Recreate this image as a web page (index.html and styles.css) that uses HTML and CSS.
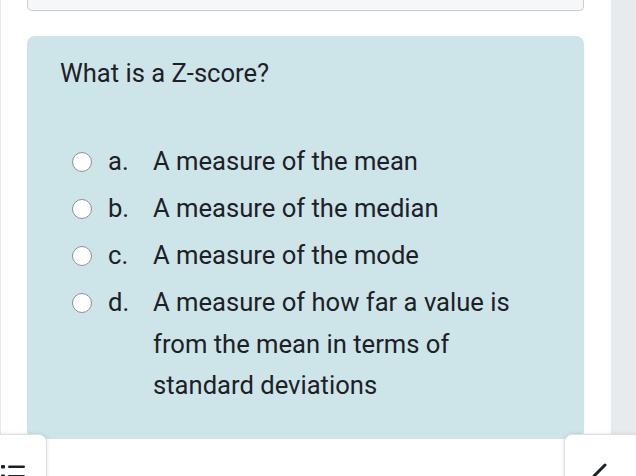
FILE: index.html
```html
<!DOCTYPE html>
<html lang="en">
<head>
<meta charset="utf-8">
<title>Quiz question</title>
<link rel="stylesheet" href="styles.css">
</head>
<body>
<div class="page">
  <div class="edge"></div>
  <main class="main">
    <div class="prev-box"></div>
    <section class="card">
      <div class="qtext">What is a Z-score?</div>
      <div class="answers">
        <label class="opt"><input type="radio" name="q1" class="radio"><span class="num">a.</span><span class="txt">A measure of the mean</span></label>
        <label class="opt"><input type="radio" name="q1" class="radio"><span class="num">b.</span><span class="txt">A measure of the median</span></label>
        <label class="opt"><input type="radio" name="q1" class="radio"><span class="num">c.</span><span class="txt">A measure of the mode</span></label>
        <label class="opt"><input type="radio" name="q1" class="radio"><span class="num">d.</span><span class="txt">A measure of how far a value is from the mean in terms of standard deviations</span></label>
      </div>
    </section>
  </main>
  <div class="rail"></div>
  <button class="fab fab-left" aria-label="Quiz navigation">
    <svg class="list-icon" width="24" height="20" viewBox="0 0 24 20">
      <rect x="0" y="1" width="4" height="3.5" rx="1" fill="#1d2125"/>
      <rect x="7" y="1.5" width="17" height="2.5" rx="1.2" fill="#1d2125"/>
      <rect x="0" y="10.5" width="4" height="3.5" rx="1" fill="#1d2125"/>
      <rect x="7" y="11" width="17" height="2.5" rx="1.2" fill="#1d2125"/>
    </svg>
  </button>
  <button class="fab fab-right" aria-label="Open drawer">
    <svg class="chev" width="24" height="30" viewBox="0 0 24 30">
      <polyline points="15,2 4,13 15,24" fill="none" stroke="#1d2125" stroke-width="3" stroke-linecap="round" stroke-linejoin="round"/>
    </svg>
  </button>
</div>
</body>
</html>
```
FILE: styles.css
```css
* { box-sizing: border-box; }
html, body { margin: 0; padding: 0; background: #ffffff; }
body {
  font-family: Roboto, "Liberation Sans", Arial, sans-serif;
  color: #1d2125;
}
.page {
  position: relative;
  display: flex;
  width: 636px;
  height: 476px;
  overflow: hidden;
}
.edge { width: 1px; background: #e6e9ec; flex: none; }
.main {
  flex: 1;
  padding: 0 27px 0 26px;
}
.rail { width: 25px; flex: none; background: #e8ebee; }

.prev-box {
  height: 11px;
  background: #f6f7f9;
  border: 1px solid #c9cdd2;
  border-top: none;
  border-radius: 0 0 5px 5px;
}
.card {
  margin-top: 25px;
  height: 403px;
  background: #cde5e9;
  border-radius: 8px;
  padding: 16.5px 32px 0 33px;
}
.qtext {
  font-size: 25.6px;
  line-height: 41.6px;
}
.answers {
  margin-top: 44.5px;
}
.opt {
  display: flex;
  align-items: flex-start;
  padding: 2.7px 0;
  font-size: 25.6px;
  line-height: 41.6px;
}
.radio {
  -webkit-appearance: none;
  appearance: none;
  flex: none;
  width: 20px;
  height: 20px;
  margin: 10.5px 16px 0 12px;
  border: 1.6px solid #8c9097;
  border-radius: 50%;
  background: #ffffff;
}
.num { flex: none; width: 45px; }
.txt { flex: 1; }

.fab {
  position: absolute;
  top: 434px;
  height: 70px;
  background: #ffffff;
  border: 1px solid #dcdfe3;
  border-radius: 8px;
  box-shadow: 0 0 4px rgba(0, 0, 0, 0.12);
  padding: 0;
  z-index: 2;
}
.fab-left { left: -12px; width: 59px; }
.fab-right { left: 564px; width: 90px; }
.list-icon { position: absolute; left: 12px; top: 29px; }
.chev { position: absolute; left: 25px; top: 28px; }
```
